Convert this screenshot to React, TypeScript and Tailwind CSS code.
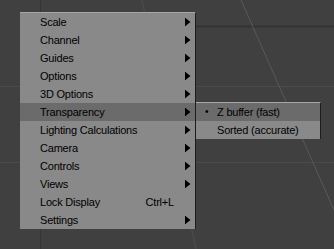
import React from "react";

type Item = { label: string; sub?: boolean; shortcut?: string; active?: boolean };

const items: Item[] = [
  { label: "Scale", sub: true },
  { label: "Channel", sub: true },
  { label: "Guides", sub: true },
  { label: "Options", sub: true },
  { label: "3D Options", sub: true },
  { label: "Transparency", sub: true, active: true },
  { label: "Lighting Calculations", sub: true },
  { label: "Camera", sub: true },
  { label: "Controls", sub: true },
  { label: "Views", sub: true },
  { label: "Lock Display", shortcut: "Ctrl+L" },
  { label: "Settings", sub: true },
];

function Arrow() {
  return (
    <svg width="6" height="8" viewBox="0 0 6 8" className="shrink-0">
      <rect x="0" y="0" width="1" height="8" fill="#000" />
      <polygon points="1,0.5 5.5,4 1,7.5" fill="#000" />
    </svg>
  );
}

export default function App() {
  return (
    <div
      className="relative h-[249px] w-[334px] overflow-hidden bg-[#404040] text-[11px] tracking-[-0.2px] text-black"
      style={{ fontFamily: '"Liberation Sans", Arial, sans-serif' }}
    >
      <svg className="absolute inset-0" width="334" height="249">
        <line x1="196" y1="26.5" x2="334" y2="26.5" stroke="#333333" strokeWidth="2" />
        <line x1="0" y1="86.5" x2="334" y2="86.5" stroke="#4b4b4b" strokeWidth="1" />
        <line x1="0" y1="162.5" x2="334" y2="162.5" stroke="#4b4b4b" strokeWidth="1" />
        <line x1="40.5" y1="0" x2="40.5" y2="249" stroke="#353535" strokeWidth="1" />
        <line x1="241" y1="0" x2="334" y2="210" stroke="#595959" strokeWidth="1" />
        <line x1="142" y1="0" x2="196" y2="249" stroke="#4e4e4e" strokeWidth="1" />
      </svg>

      <div className="absolute left-[20px] top-[12px] w-[176px] border-t border-r border-t-[#a6a6a6] border-r-[#1c1c1c] bg-[#898989]">
        {items.map((it) => (
          <div
            key={it.label}
            className={
              "flex h-[18px] items-center pl-[20px] pr-[4px] " + (it.active ? "bg-[#6b6b6b]" : "")
            }
          >
            <span className="flex-1 whitespace-nowrap">{it.label}</span>
            {it.shortcut ? <span className="mr-[17px]">{it.shortcut}</span> : null}
            {it.sub ? <Arrow /> : null}
          </div>
        ))}
      </div>

      <div className="absolute left-[196px] top-[102px] w-[125px] border-t border-r border-t-[#a6a6a6] border-r-[#1c1c1c] bg-[#898989]">
        <div className="flex h-[18px] items-center bg-[#6b6b6b]">
          <span className="w-[21px] pl-[9px] text-[10px] leading-none">•</span>
          <span className="whitespace-nowrap">Z buffer (fast)</span>
        </div>
        <div className="flex h-[18px] items-center">
          <span className="w-[21px]" />
          <span className="whitespace-nowrap">Sorted (accurate)</span>
        </div>
      </div>
    </div>
  );
}
